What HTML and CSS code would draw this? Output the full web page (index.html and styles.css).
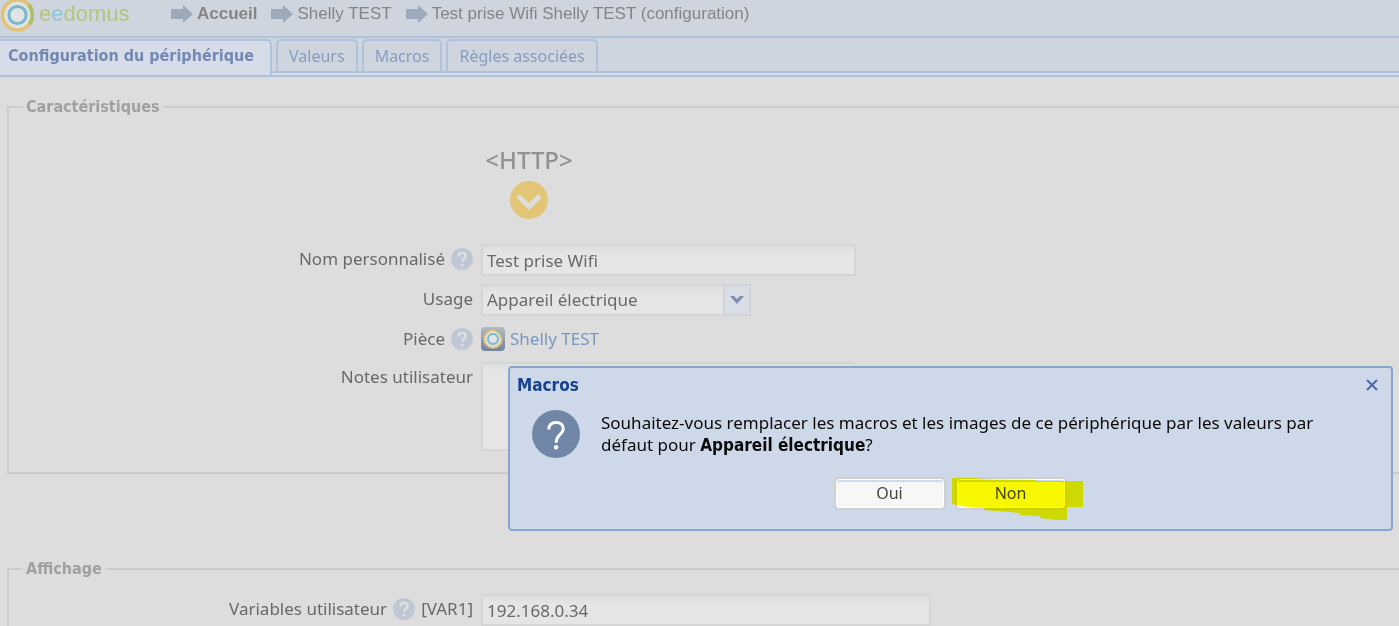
FILE: index.html
```html
<!DOCTYPE html>
<html lang="fr">
<head>
<meta charset="utf-8">
<title>eedomus - Configuration du périphérique</title>
<link rel="stylesheet" href="styles.css">
</head>
<body>
<svg class="defs" aria-hidden="true">
  <symbol id="arrow" viewBox="0 0 22 18"><path d="M0 4H12V0L22 9L12 18V14H0Z" fill="#9caabb"/></symbol>
  <symbol id="help" viewBox="0 0 22 22"><circle cx="11" cy="11" r="11" fill="#bfc7d3"/><path d="M7.6 8.2C7.6 6 9 4.9 11.1 4.9C13.2 4.9 14.6 6.1 14.6 7.9C14.6 10.4 11.1 10.6 11.1 13.6" fill="none" stroke="#dde0e4" stroke-width="2.400"/><circle cx="11.1" cy="17" r="1.5" fill="#dde0e4"/></symbol>
</svg>

<header class="topbar">
  <svg class="logo-mark" viewBox="0 0 34 32" aria-hidden="true">
    <circle cx="17.500" cy="15" r="14" fill="#e0e3e5"/>
    <circle cx="17.500" cy="15" r="15" fill="none" stroke="#e2c378" stroke-width="3.600"/>
    <path d="M28.500 4.800A15 15 0 0 1 29.500 24" fill="none" stroke="#adc06c" stroke-width="4"/>
    <circle cx="17.500" cy="15" r="8.600" fill="#e2e3e4" stroke="#7ab8c9" stroke-width="3"/>
  </svg>
  <span class="logo-text">e<span class="logo-blue">e</span>domus</span>
  <nav class="crumbs">
    <a href="#" class="crumb crumb-home"><svg class="arrow"><use href="#arrow"/></svg>Accueil</a>
    <a href="#" class="crumb"><svg class="arrow"><use href="#arrow"/></svg>Shelly TEST</a>
    <a href="#" class="crumb"><svg class="arrow"><use href="#arrow"/></svg>Test prise Wifi Shelly TEST (configuration)</a>
  </nav>
</header>

<nav class="tabs">
  <button type="button" class="tab tab-active">Configuration du périphérique</button>
  <button type="button" class="tab">Valeurs</button>
  <button type="button" class="tab">Macros</button>
  <button type="button" class="tab">Règles associées</button>
</nav>

<main class="content">
  <fieldset class="panel">
    <legend>Caractéristiques</legend>
    <div class="form">
      <div class="device">
        <span class="device-type">&lt;HTTP&gt;</span>
        <svg class="device-more" viewBox="0 0 38 38" aria-hidden="true"><circle cx="19" cy="19" r="19" fill="#e2c577"/><path d="M8 15L19 25.500L30 15" fill="none" stroke="#dededb" stroke-width="5"/></svg>
      </div>

      <div class="label"><label for="name">Nom personnalisé</label><svg class="help"><use href="#help"/></svg></div>
      <input id="name" class="field field-name" type="text" value="Test prise Wifi">

      <div class="label"><label for="usage">Usage</label></div>
      <div class="combo">
        <select id="usage" class="field"><option>Appareil électrique</option></select>
        <span class="trigger"><svg viewBox="0 0 14 8" aria-hidden="true"><path d="M0 0H4L7 3L10 0H14L7 8Z" fill="#7f8eb0"/></svg></span>
      </div>

      <div class="label"><span>Pièce</span><svg class="help"><use href="#help"/></svg></div>
      <a href="#" class="room">
        <svg class="room-icon" viewBox="0 0 24 24" aria-hidden="true">
          <defs><linearGradient id="tile" x1="0" y1="0" x2="0" y2="1"><stop offset="0" stop-color="#b1bac8"/><stop offset="1" stop-color="#74829a"/></linearGradient></defs>
          <rect width="24" height="24" rx="4" fill="url(#tile)"/>
          <circle cx="12" cy="12" r="8.800" fill="#dddfdf" stroke="#e2c378" stroke-width="1.800"/>
          <path d="M14.500 3.600A8.800 8.800 0 0 1 20.700 11" fill="none" stroke="#adc06c" stroke-width="1.800"/>
          <circle cx="12" cy="12" r="5" fill="#e1e2e3" stroke="#7ab8c9" stroke-width="1.900"/>
        </svg>Shelly TEST</a>

      <div class="label"><label for="notes">Notes utilisateur</label></div>
      <textarea id="notes" class="field field-notes"></textarea>
    </div>
  </fieldset>

  <fieldset class="panel">
    <legend>Affichage</legend>
    <div class="form form-display">
      <div class="label"><label for="var1">Variables utilisateur</label><svg class="help"><use href="#help"/></svg><span>[VAR1]</span></div>
      <input id="var1" class="field field-var" type="text" value="192.168.0.34">
    </div>
  </fieldset>
</main>

<section class="dialog" role="dialog" aria-labelledby="dialog-title">
  <div class="dialog-head">
    <h2 id="dialog-title">Macros</h2>
    <button type="button" class="close" aria-label="Fermer"><svg viewBox="0 0 12 12"><path d="M1 1L11 11M11 1L1 11" stroke="#4e68ae" stroke-width="2"/></svg></button>
  </div>
  <div class="dialog-body">
    <svg class="question" viewBox="0 0 48 48" aria-hidden="true"><circle cx="24" cy="24" r="24" fill="#6f86a6"/><path d="M16.800 19.500C16.800 14.900 19.600 12.500 24.300 12.500C28.600 12.500 31.300 15 31.300 18.700C31.300 24 24.100 25 24.100 32.800" fill="none" stroke="#fff" stroke-width="3"/><circle cx="24.100" cy="37.300" r="2.200" fill="#fff"/></svg>
    <p>Souhaitez-vous remplacer les macros et les images de ce périphérique par les valeurs par défaut pour <b>Appareil électrique</b>?</p>
  </div>
  <div class="actions">
    <button type="button" class="btn">Oui</button>
    <div class="marked">
      <button type="button" class="btn">Non</button>
      <svg class="marker" viewBox="0 0 131 43" aria-hidden="true"><path d="M0 0H23L32 1L84 2V3H131V29H115V42H105L88 40V38L68 37V35L32 32V30L17 29L5 27L0 26Z" fill="#ff0"/></svg>
    </div>
  </div>
</section>
</body>
</html>
```
FILE: styles.css
```css
* { box-sizing: border-box; }
body {
  margin: 0;
  height: 100vh;
  overflow: hidden;
  background: #ddd;
  color: #696969;
  font: 17px/22px "Noto Sans", sans-serif;
}
button, input, select, textarea { font: inherit; color: inherit; }
a { text-decoration: none; color: inherit; }
.defs { display: none; }

.topbar {
  display: flex;
  align-items: flex-start;
  height: 38px;
  border-bottom: 2px solid #afc3db;
  background: #ced5df;
  font-family: "Liberation Sans", Arial, sans-serif;
}
.logo-mark { width: 34px; height: 32px; flex: none; }
.logo-text { width: 131px; padding-left: 5px; color: #b3c680; font-size: 22px; line-height: 28px; }
.logo-blue { color: #8fc4d9; }
.crumbs { display: flex; gap: 14px; padding-left: 6px; font-size: 17px; line-height: 27px; color: #858585; }
.crumb { display: flex; align-items: center; gap: 4px; white-space: nowrap; }
.crumb-home { font-weight: bold; }
.arrow { width: 22px; height: 18px; }

.tabs {
  display: flex;
  gap: 4px;
  height: 39px;
  padding-top: 1px;
  border-bottom: 2px solid #afc1db;
  background: linear-gradient(#ced5df 33px, #afc1db 33px 35px, #d6dde8 35px);
}
.tab {
  height: 32px;
  padding: 0 11px;
  border: 2px solid #b1c3dc;
  border-bottom: 0;
  border-radius: 5px 5px 0 0;
  background: #ced5df;
  color: #879dbe;
  font-size: 16px;
  white-space: nowrap;
}
.tab-active {
  height: 36px;
  padding: 0 16px 4px 8px;
  border-left: 0;
  border-top-left-radius: 0;
  background: #d6dde9;
  color: #7389b3;
}
.tab-active, .panel legend, .dialog h2, .dialog b {
  font-family: "DejaVu Sans Condensed", "Noto Sans", sans-serif;
  font-weight: bold;
}

.content { padding-left: 7px; }
.panel {
  min-width: 0;
  margin: 0 -2px 84px 0;
  padding: 0 0 21px;
  border: 2px solid #ccc;
}
.panel:first-child { margin-top: 19px; }
.panel legend {
  margin-left: 14px;
  padding: 0 3px;
  color: #a0a0a0;
  font-size: 16px;
}
.form {
  display: grid;
  grid-template-columns: 464px 1fr;
  gap: 8px;
  justify-items: start;
  padding-top: 27px;
}
.form-display { padding-top: 14px; }
.device {
  grid-column: 2;
  width: 96px;
  height: 91px;
  display: flex;
  flex-direction: column;
  align-items: center;
  gap: 6px;
}
.device-type { color: #929292; font: 500 24px/30px "Noto Sans", sans-serif; }
.device-more { width: 38px; height: 38px; flex: none; }
.label { justify-self: end; display: flex; align-items: center; gap: 6px; height: 30px; white-space: nowrap; }
.help { width: 22px; height: 22px; }
.field {
  height: 32px;
  padding: 0 4px;
  border: 2px solid #d5d5d5;
  border-radius: 0;
  background: linear-gradient(#dee0df, #e5e5e5 10px);
}
.field-name { width: 375px; }
.field-var { width: 450px; }
.field-notes { width: 375px; height: 89px; resize: none; }
.combo { display: grid; width: 270px; }
.combo .field { grid-area: 1 / 1; width: 100%; appearance: none; }
.trigger {
  grid-area: 1 / 1;
  justify-self: end;
  display: grid;
  place-items: center;
  width: 28px;
  border: 2px solid #d3d4d7;
  border-radius: 0 3px 3px 0;
  background: #d9dee6;
  pointer-events: none;
}
.trigger svg { width: 14px; height: 8px; }
.room { display: flex; align-items: center; gap: 5px; height: 30px; color: #7897c2; }
.room-icon { width: 24px; height: 24px; }

.dialog {
  position: absolute;
  top: 366px;
  left: 508px;
  right: 6px;
  height: 165px;
  padding: 6px 12px 18px 7px;
  border: 2px solid #89a5cb;
  border-radius: 4px;
  background: #cdd9e9;
  color: #0a0a0a;
}
.dialog-head { display: flex; justify-content: space-between; align-items: center; }
.dialog h2 { margin: 0; color: #17428f; font-size: 17px; line-height: 22px; }
.close { width: 14px; height: 14px; padding: 1px; border: 0; background: none; }
.close svg { display: block; width: 12px; height: 12px; }
.dialog-body { display: flex; align-items: center; gap: 21px; padding: 14px 60px 0 15px; }
.dialog-body p { margin: 0; }
.question { width: 48px; height: 48px; flex: none; }
.actions { display: flex; justify-content: center; gap: 9px; padding: 19px 0 0 4px; }
.btn {
  display: block;
  width: 112px;
  height: 33px;
  padding: 0 0 2px;
  border: 2px solid #cfcfcf;
  border-radius: 5px;
  background: #f7f7f7;
  box-shadow: inset 0 0 0 1px #fff, inset 0 2px 0 1px #cfdaeb;
  color: #444;
  font-size: 16px;
}
.marked { position: relative; }
.marker {
  position: absolute;
  top: 1px;
  left: -3px;
  width: 131px;
  height: 43px;
  mix-blend-mode: multiply;
  pointer-events: none;
}
```
